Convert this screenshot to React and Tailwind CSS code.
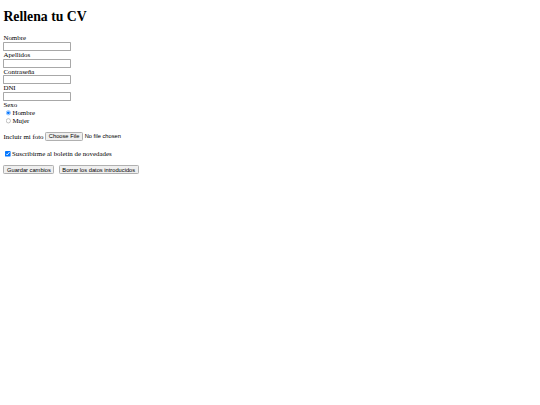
export default function App() {
  const ctrl =
    "font-['Liberation_Sans',Arial,sans-serif] text-[13.333px] leading-[normal]";
  const textInput =
    "block w-[156px] h-[21px] px-[2px] py-[1px] border border-[#a8a8a8] rounded-[2px] bg-white " +
    ctrl;
  const btn =
    "bg-[#efefef] border border-[#b0b0b0] rounded-[3px] px-[6px] py-[1px] text-black " +
    ctrl;
  const radio = "align-[-2px] w-[13px] h-[13px] m-[0px_3px_0px_5px] accent-[#0075ff]";

  return (
    <div className="min-h-screen bg-white text-black">
      <div className="[zoom:0.43] p-[8px] font-['Liberation_Serif','Times_New_Roman',serif] text-[16px] leading-[normal]">
        <h1 className="text-[32px] font-bold mt-[13px] mb-[21.44px]">Rellena tu CV</h1>
        <form>
          <label className="block h-[18px]">Nombre</label>
          <input type="text" className={textInput} />
          <label className="block h-[18px]">Apellidos</label>
          <input type="text" className={textInput} />
          <label className="block h-[18px]">Contraseña</label>
          <input type="password" className={textInput} />
          <label className="block h-[18px]">DNI</label>
          <input type="text" className={textInput} />
          <label className="block h-[18px]">Sexo</label>
          <div className="h-[19px]">
            <input type="radio" name="sexo" defaultChecked className={radio} />
            Hombre
          </div>
          <div className="h-[19px]">
            <input type="radio" name="sexo" className={radio} />
            Mujer
          </div>
          <p className="mt-[15px] mb-[20px] h-[22px] flex items-center gap-[4px]">
            <span>Incluir mi foto</span>
            <input
              type="file"
              className={
                "text-black file:bg-[#efefef] file:border file:border-solid file:border-[#b0b0b0] file:rounded-[3px] file:px-[6px] file:py-[1px] file:mr-[4px] file:text-black " +
                ctrl
              }
            />
          </p>
          <p className="mb-[17px] h-[19px]">
            <input
              type="checkbox"
              defaultChecked
              className="align-[-2px] m-[0px_3px_0px_4px] accent-[#0075ff]"
            />
            Suscribirme al boletín de novedades
          </p>
          <p className="flex gap-[10px] items-center">
            <button type="button" className={btn}>
              Guardar cambios
            </button>
            <button type="reset" className={btn}>
              Borrar los datos introducidos
            </button>
          </p>
        </form>
      </div>
    </div>
  );
}
